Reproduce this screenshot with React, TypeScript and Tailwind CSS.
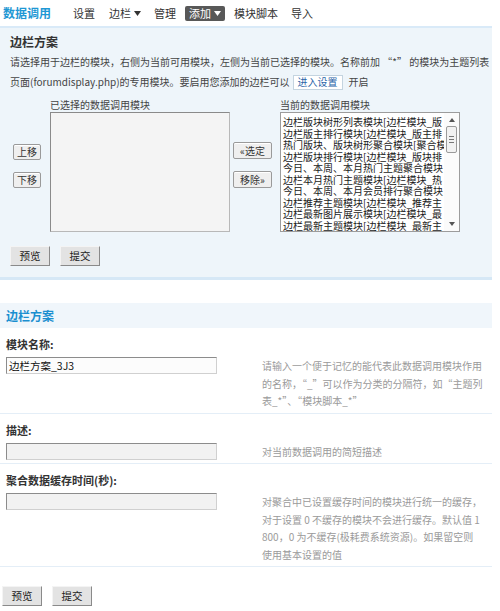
const Caret = ({ color = '#333' }: { color?: string }) => (
  <svg width="7" height="5" viewBox="0 0 7 5" className="ml-[3px]">
    <path d="M0 0 L7 0 L3.5 5 Z" fill={color} />
  </svg>
);

const SmallBtn = ({ label, w }: { label: string; w: string }) => (
  <div
    className={`${w} flex h-[16px] items-center justify-center rounded-[2px] border border-[#9a9a9a] bg-[#efefef] text-[10px] leading-none text-[#333] shadow-[inset_0_1px_0_#fff]`}>
    {label}
  </div>
);

const SubmitBtn = ({ label }: { label: string }) => (
  <div className="flex h-[20px] w-[40px] items-center justify-center border border-t-[#f4f4f4] border-l-[#f4f4f4] border-r-[#8a8a8a] border-b-[#8a8a8a] bg-[#e3e3e3] text-[10.5px] text-[#222]">
    {label}
  </div>
);

// only the part that shows inside the list box
const options = [
  '边栏版块树形列表模块[边栏模块_版',
  '边栏版主排行模块[边栏模块_版主排',
  '热门版块、版块树形聚合模块[聚合模',
  '边栏版块排行模块[边栏模块_版块排',
  '今日、本周、本月热门主题聚合模块',
  '边栏本月热门主题模块[边栏模块_热',
  '今日、本周、本月会员排行聚合模块',
  '边栏推荐主题模块[边栏模块_推荐主',
  '边栏最新图片展示模块[边栏模块_最',
  '边栏最新主题模块[边栏模块_最新主',
];

type FieldProps = {
  label: string;
  value?: string;
  white?: boolean;
  help: string[];
};

const Field = ({ label, value, white, help }: FieldProps) => (
  <div className="border-b border-[#e4eef7] pt-[7px] pb-[3px]">
    <div className="pl-[6px] text-[11px] font-bold leading-[18px] text-[#333]">{label}</div>
    <div className="mt-[4px] flex items-start">
      <div
        className={`ml-[6px] flex h-[17px] w-[211px] items-center border border-t-[#8c8c8c] border-l-[#8c8c8c] border-r-[#d0d0d0] border-b-[#d0d0d0] pl-[2px] text-[10.5px] text-[#111] ${white ? 'bg-[#fcfcfc]' : 'bg-[#f2f2f2]'}`}>
        {value}
      </div>
      <div className="ml-[45px] text-[10px] leading-[17.5px] whitespace-nowrap text-[#9a9a9a]">
        {help.map((h, i) => (
          <div key={i}>{h}</div>
        ))}
      </div>
    </div>
  </div>
);

export default function App() {
  return (
    <div className="min-h-[611px] w-[500px] bg-white font-['Noto_Sans_CJK_SC','Noto_Sans',sans-serif] text-[#333]">
      <div className="w-[492px]">
        {/* top nav */}
        <div className="flex h-[26px] items-center text-[11px] text-[#333]">
          <span className="ml-[3px] text-[12px] font-bold text-[#1f98d4]">数据调用</span>
          <span className="ml-[22px]">设置</span>
          <span className="ml-[14px] flex items-center">
            边栏
            <Caret />
          </span>
          <span className="ml-[13px]">管理</span>
          <span className="ml-[9px] flex h-[15px] items-center rounded-[2px] bg-[#585858] px-[4px] text-white">
            添加
            <Caret color="#fff" />
          </span>
          <span className="ml-[9px]">模块脚本</span>
          <span className="ml-[13px]">导入</span>
        </div>

        {/* panel */}
        <div className="border-t-2 border-b-[3px] border-t-[#d9eaf8] border-b-[#d6e8f6] bg-[#eef5fa] pt-[4px] pb-[11px]">
          <div className="pl-[10px] text-[12px] font-bold leading-[20px] text-[#333]">边栏方案</div>
          <div className="pl-[10px] text-[10px] leading-[20px] whitespace-nowrap text-[#444]">
            <div>请选择用于边栏的模块，右侧为当前可用模块，左侧为当前已选择的模块。名称前加 “*” 的模块为主题列表</div>
            <div className="flex items-center">
              页面(forumdisplay.php)的专用模块。要启用您添加的边栏可以
              <span className="ml-[3px] flex h-[15px] items-center border border-[#c4d4e0] bg-white px-[4px] text-[#2a64a8]">
                进入设置
              </span>
              <span className="ml-[6px]">开启</span>
            </div>
          </div>

          <div className="mt-[6px] ml-[13px] flex items-start">
            <div className="flex w-[37px] flex-col pt-[46px]">
              <SmallBtn label="上移" w="w-[28px]" />
              <div className="h-[12px]" />
              <SmallBtn label="下移" w="w-[28px]" />
            </div>
            <div className="w-[180px]">
              <div className="text-[10px] leading-[14px] text-[#444]">已选择的数据调用模块</div>
              <div className="h-[120px] border border-t-[#8a8a8a] border-l-[#8a8a8a] border-r-[#b8b8b8] border-b-[#b8b8b8] bg-[#f4f4f4]" />
            </div>
            <div className="ml-[3px] flex w-[39px] flex-col pt-[44px]">
              <SmallBtn label="«选定" w="w-[39px] h-[17px]" />
              <div className="h-[12px]" />
              <SmallBtn label="移除»" w="w-[39px] h-[17px]" />
            </div>
            <div className="ml-[8px] w-[180px]">
              <div className="text-[10px] leading-[14px] text-[#444]">当前的数据调用模块</div>
              <div className="flex h-[120px] border border-[#9c9c9c] bg-white">
                <div className="flex-1 overflow-hidden pt-[3px] pl-[2px] text-[10px] leading-[11.5px] whitespace-nowrap text-[#1a1a1a]">
                  {options.map((o) => (
                    <div key={o}>{o}</div>
                  ))}
                </div>
                <div className="flex w-[15px] flex-col items-center bg-[#fbfbfb] py-[5px]">
                  <svg width="6" height="4" viewBox="0 0 6 4">
                    <path d="M0 4 L6 4 L3 0 Z" fill="#555" />
                  </svg>
                  <div className="mt-[4px] flex h-[27px] w-[11px] flex-col items-center justify-center gap-[2px] rounded-[2px] border border-[#9a9a9a] bg-[#f2f2f2]">
                    <div className="h-px w-[5px] bg-[#777]" />
                    <div className="h-px w-[5px] bg-[#777]" />
                    <div className="h-px w-[5px] bg-[#777]" />
                  </div>
                  <div className="flex-1" />
                  <svg width="6" height="4" viewBox="0 0 6 4">
                    <path d="M0 0 L6 0 L3 4 Z" fill="#555" />
                  </svg>
                </div>
              </div>
            </div>
          </div>

          <div className="mt-[14px] ml-[10px] flex gap-[10px]">
            <SubmitBtn label="预览" />
            <SubmitBtn label="提交" />
          </div>
        </div>

        {/* second section */}
        <div className="mt-[23px] flex h-[25px] items-center bg-[#f0f6fb] pl-[6px] text-[12px] font-bold text-[#1b8fd0]">
          边栏方案
        </div>
        <Field
          label="模块名称:"
          value="边栏方案_3J3"
          white
          help={[
            '请输入一个便于记忆的能代表此数据调用模块作用',
            '的名称，“_”可以作为分类的分隔符，如“主题列',
            '表_*”、“模块脚本_*”',
          ]}
        />
        <Field label="描述:" help={['对当前数据调用的简短描述']} />
        <Field
          label="聚合数据缓存时间(秒):"
          help={[
            '对聚合中已设置缓存时间的模块进行统一的缓存，',
            '对于设置 0 不缓存的模块不会进行缓存。默认值 1',
            '800，0 为不缓存(极耗费系统资源)。如果留空则',
            '使用基本设置的值',
          ]}
        />
        <div className="mt-[19px] ml-[2px] flex gap-[10px]">
          <SubmitBtn label="预览" />
          <SubmitBtn label="提交" />
        </div>
      </div>
    </div>
  );
}
